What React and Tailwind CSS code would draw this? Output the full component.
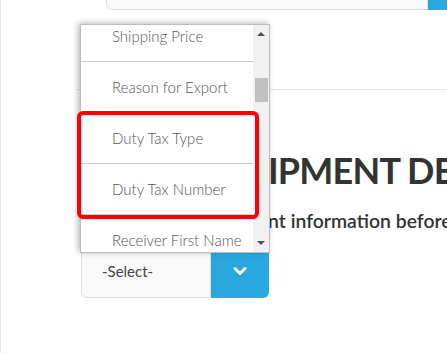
import { ChevronDown } from 'lucide-react';

const options = [
  'Shipping Price',
  'Reason for Export',
  'Duty Tax Type',
  'Duty Tax Number',
  'Receiver First Name',
];

export default function App() {
  return (
    <div className="relative h-[353px] w-[447px] overflow-hidden border-l border-[#e8e8e8] bg-white font-['Lato',sans-serif]">
      {/* Top input row, cut off by the viewport */}
      <div className="-mt-[30px] ml-[105px] flex h-[40px]">
        <div className="flex-1 rounded-bl-md border border-[#dcdcdc] bg-[#f9f9f9]" />
        <div className="w-[19px] bg-[#29a8e0]" />
      </div>

      <div className="ml-[76px] mt-[79px] border-t border-[#e3e3e3]" />

      {/* Heading (start of it sits under the open list) */}
      <div className="mt-[60px] flex whitespace-nowrap text-[36px] font-bold leading-[40px] tracking-[-0.8px] text-[#333]">
        <span className="w-[267px] shrink-0 text-right">SH</span>
        <span>IPMENT DETAILS</span>
      </div>
      <div className="mt-[20px] flex whitespace-nowrap text-[19.4px] font-semibold leading-[22px] text-[#333]">
        <span className="w-[267px] shrink-0 text-right">the shipme</span>
        <span>nt information before submitting</span>
      </div>

      {/* Select */}
      <div className="ml-[80px] mt-[12px] flex h-[54px] w-[188px]">
        <div className="flex flex-1 items-center rounded-l-md border border-[#dedede] bg-[#f9f9f9] pl-[20px] text-[15px] text-[#444]">
          -Select-
        </div>
        <div className="flex w-[58px] items-center justify-center rounded-r-md bg-[#29a8e0] text-white">
          <ChevronDown size={20} strokeWidth={3.5} />
        </div>
      </div>

      {/* Open option list */}
      <div className="absolute left-[79px] top-[24px] z-10 flex h-[229px] w-[190px] border border-[#bdbdbd] bg-white shadow-[-2px_-1px_6px_rgba(0,0,0,0.28)]">
        <div className="flex-1 overflow-hidden">
          <div className="-mt-[14px]">
            {options.map((o) => (
              <div
                key={o}
                className="flex h-[51px] items-center border-b border-[#c9c9c9] pl-[31px] text-[15px] font-light text-[#555]"
              >
                {o}
              </div>
            ))}
          </div>
        </div>
        <div className="flex w-[16px] flex-col items-center bg-[#f1f1f1]">
          <div className="mt-[7px] h-0 w-0 border-x-[4px] border-b-[4px] border-x-transparent border-b-[#505050]" />
          <div className="mt-[42px] h-[24px] w-[13px] bg-[#c1c1c1]" />
          <div className="mt-auto mb-[7px] h-0 w-0 border-x-[4px] border-t-[4px] border-x-transparent border-t-[#505050]" />
        </div>
      </div>

      {/* Highlight box */}
      <div className="absolute left-[76px] top-[111px] z-20 h-[108px] w-[182px] rounded-md border-4 border-[#ff0000]" />
    </div>
  );
}
